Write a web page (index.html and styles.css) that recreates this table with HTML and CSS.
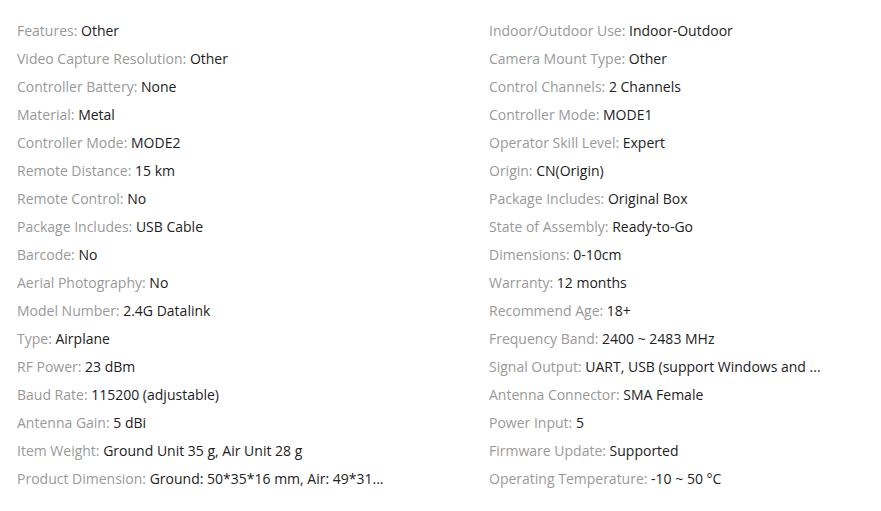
FILE: index.html
```html
<!DOCTYPE html>
<html>
<head>
<meta charset="utf-8">
<link rel="stylesheet" href="styles.css">
</head>
<body>
<div class="specs">
  <ul class="col">
    <li><span class="k">Features:</span> <span class="v">Other</span></li>
    <li><span class="k">Video Capture Resolution:</span> <span class="v">Other</span></li>
    <li><span class="k">Controller Battery:</span> <span class="v">None</span></li>
    <li><span class="k">Material:</span> <span class="v">Metal</span></li>
    <li><span class="k">Controller Mode:</span> <span class="v">MODE2</span></li>
    <li><span class="k">Remote Distance:</span> <span class="v">15 km</span></li>
    <li><span class="k">Remote Control:</span> <span class="v">No</span></li>
    <li><span class="k">Package Includes:</span> <span class="v">USB Cable</span></li>
    <li><span class="k">Barcode:</span> <span class="v">No</span></li>
    <li><span class="k">Aerial Photography:</span> <span class="v">No</span></li>
    <li><span class="k">Model Number:</span> <span class="v">2.4G Datalink</span></li>
    <li><span class="k">Type:</span> <span class="v">Airplane</span></li>
    <li><span class="k">RF Power:</span> <span class="v">23 dBm</span></li>
    <li><span class="k">Baud Rate:</span> <span class="v">115200 (adjustable)</span></li>
    <li><span class="k">Antenna Gain:</span> <span class="v">5 dBi</span></li>
    <li><span class="k">Item Weight:</span> <span class="v">Ground Unit 35 g, Air Unit 28 g</span></li>
    <li><span class="k">Product Dimension:</span> <span class="v">Ground: 50*35*16 mm, Air: 49*31...</span></li>
  </ul>
  <ul class="col">
    <li><span class="k">Indoor/Outdoor Use:</span> <span class="v">Indoor-Outdoor</span></li>
    <li><span class="k">Camera Mount Type:</span> <span class="v">Other</span></li>
    <li><span class="k">Control Channels:</span> <span class="v">2 Channels</span></li>
    <li><span class="k">Controller Mode:</span> <span class="v">MODE1</span></li>
    <li><span class="k">Operator Skill Level:</span> <span class="v">Expert</span></li>
    <li><span class="k">Origin:</span> <span class="v">CN(Origin)</span></li>
    <li><span class="k">Package Includes:</span> <span class="v">Original Box</span></li>
    <li><span class="k">State of Assembly:</span> <span class="v">Ready-to-Go</span></li>
    <li><span class="k">Dimensions:</span> <span class="v">0-10cm</span></li>
    <li><span class="k">Warranty:</span> <span class="v">12 months</span></li>
    <li><span class="k">Recommend Age:</span> <span class="v">18+</span></li>
    <li><span class="k">Frequency Band:</span> <span class="v">2400 ~ 2483 MHz</span></li>
    <li><span class="k">Signal Output:</span> <span class="v">UART, USB (support Windows and ...</span></li>
    <li><span class="k">Antenna Connector:</span> <span class="v">SMA Female</span></li>
    <li><span class="k">Power Input:</span> <span class="v">5</span></li>
    <li><span class="k">Firmware Update:</span> <span class="v">Supported</span></li>
    <li><span class="k">Operating Temperature:</span> <span class="v">-10 ~ 50 °C</span></li>
  </ul>
</div>
</body>
</html>
```

FILE: styles.css
```css
html, body {
  margin: 0;
  padding: 0;
  background: #fff;
}
body {
  font-family: "Open Sans", "Liberation Sans", sans-serif;
  font-size: 14px;
}
.specs {
  display: grid;
  grid-template-columns: 472px 1fr;
  padding: 17px 0 0 17px;
}
.col {
  list-style: none;
  margin: 0;
  padding: 0;
}
.col li {
  line-height: 28px;
  height: 28px;
  white-space: nowrap;
}
.k {
  color: #999;
}
.v {
  color: #222;
}
```
